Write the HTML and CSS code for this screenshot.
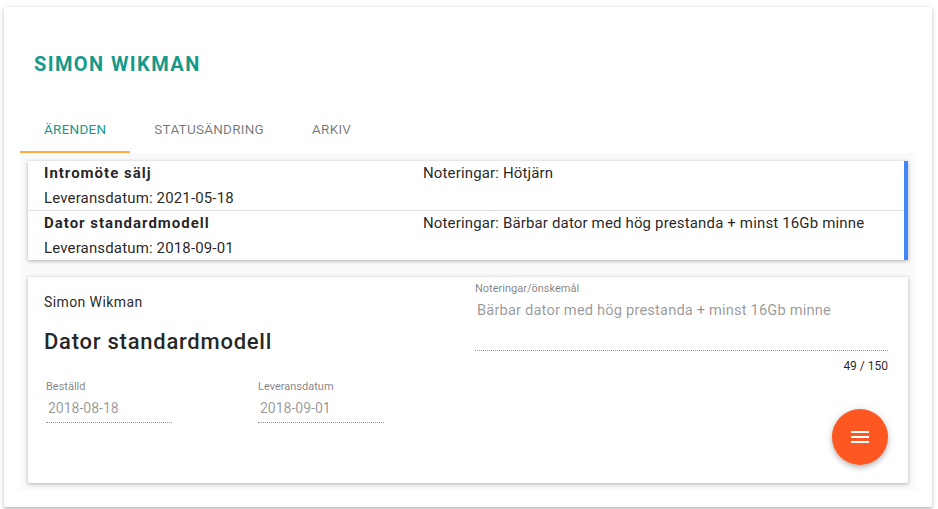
FILE: index.html
```html
<!DOCTYPE html>
<html lang="sv">
<head>
  <meta charset="UTF-8" />
  <meta name="viewport" content="width=device-width, initial-scale=1.0" />
  <title>Simon Wikman</title>
  <link rel="stylesheet" href="styles.css">
</head>
<body>
  <div class="page-card">
    <h1 class="customer-name">SIMON WIKMAN</h1>

    <div class="tabs">
      <div class="tab active">Ärenden</div>
      <div class="tab">Statusändring</div>
      <div class="tab">Arkiv</div>
    </div>

    <div class="tab-content">
      <div class="case-list">
        <div class="case-row">
          <div class="case-main">
            <div class="case-title">Intromöte sälj</div>
            <div class="case-date">Leveransdatum: 2021-05-18</div>
          </div>
          <div class="case-notes">Noteringar: Hötjärn</div>
        </div>
        <div class="case-row">
          <div class="case-main">
            <div class="case-title">Dator standardmodell</div>
            <div class="case-date">Leveransdatum: 2018-09-01</div>
          </div>
          <div class="case-notes">Noteringar: Bärbar dator med hög prestanda + minst 16Gb minne</div>
        </div>
      </div>

      <div class="case-detail">
        <div class="detail-left">
          <div class="detail-owner">Simon Wikman</div>
          <h2 class="detail-title">Dator standardmodell</h2>
          <div class="detail-fields">
            <div class="field">
              <label>Beställd</label>
              <div class="field-value">2018-08-18</div>
            </div>
            <div class="field">
              <label>Leveransdatum</label>
              <div class="field-value">2018-09-01</div>
            </div>
          </div>
        </div>
        <div class="detail-right">
          <label>Noteringar/önskemål</label>
          <div class="notes-value">Bärbar dator med hög prestanda + minst 16Gb minne</div>
          <div class="notes-counter">49 / 150</div>
          <div class="fab-row">
            <button class="fab" aria-label="Meny">
              <svg width="24" height="24" viewBox="0 0 24 24"><path fill="#fff" d="M3 18h18v-2H3v2zm0-5h18v-2H3v2zm0-7v2h18V6H3z"/></svg>
            </button>
          </div>
        </div>
      </div>
    </div>
  </div>
</body>
</html>
```

FILE: styles.css
```css
body {
  margin: 0;
  padding: 7px 6px 2px 4px;
  background: #fff;
  font-family: Roboto, 'Noto Sans', sans-serif;
  color: rgba(0, 0, 0, 0.87);
}

.page-card {
  background: #fff;
  border-radius: 2px;
  box-shadow: 0 1px 5px rgba(0, 0, 0, 0.2), 0 2px 2px rgba(0, 0, 0, 0.14);
  padding: 0 16px 17px 16px;
  height: 500px;
  box-sizing: border-box;
}

.customer-name {
  margin: 0;
  padding: 45px 0 0 14px;
  height: 53px;
  font-size: 20px;
  font-weight: 700;
  letter-spacing: 1.4px;
  color: #17998a;
  line-height: 24px;
}

.tabs {
  display: flex;
  height: 48px;
}

.tab {
  padding: 0 24px;
  line-height: 48px;
  font-size: 13.5px;
  text-transform: uppercase;
  color: rgba(0, 0, 0, 0.54);
  letter-spacing: 0.25px;
  box-sizing: border-box;
}

.tab.active {
  color: #17998a;
  border-bottom: 2px solid #ffab40;
}

.tab-content {
  background: #fafafa;
  padding: 8px 8px 7px;
}

.case-list {
  background: #fff;
  border-right: 4px solid #4285f4;
  box-shadow: 0 1px 4px rgba(0, 0, 0, 0.3);
  margin-bottom: 17px;
}

.case-row {
  display: grid;
  grid-template-columns: 379px 1fr;
  padding: 0 16px;
  font-size: 15px;
  line-height: 25px;
  letter-spacing: 0.15px;
}

.case-row + .case-row {
  border-top: 1px solid #e0e0e0;
}

.case-title {
  font-weight: 700;
  letter-spacing: 1px;
  line-height: 24px;
}

.case-date {
  padding-top: 1px;
  line-height: 24px;
}

.case-detail {
  display: flex;
  background: #fff;
  border-radius: 2px;
  box-shadow: 0 1px 4px rgba(0, 0, 0, 0.3);
  padding: 0 20px 18px 16px;
  height: 206px;
  box-sizing: border-box;
}

.detail-left {
  flex: 1;
  padding-top: 16px;
}

.detail-owner {
  font-size: 14px;
  line-height: 18px;
  letter-spacing: 0.4px;
}

.detail-title {
  margin: 17px 0 0;
  font-size: 22px;
  font-weight: 500;
  letter-spacing: 0.75px;
  line-height: 28px;
}

.detail-fields {
  display: flex;
  gap: 86px;
  margin-top: 24px;
  padding-left: 2px;
}

.field {
  width: 126px;
}

label {
  display: block;
  font-size: 11px;
  line-height: 14px;
  color: rgba(0, 0, 0, 0.5);
}

.field-value {
  margin-top: 6px;
  padding: 0 0 5px 2px;
  font-size: 14px;
  line-height: 17px;
  color: rgba(0, 0, 0, 0.42);
  border-bottom: 1px dotted rgba(0, 0, 0, 0.42);
}

.detail-right {
  width: 413px;
  padding-top: 5px;
  display: flex;
  flex-direction: column;
}

.notes-value {
  margin-top: 4px;
  padding: 0 0 29px 2px;
  font-size: 14.7px;
  line-height: 21px;
  letter-spacing: 0.15px;
  color: rgba(0, 0, 0, 0.42);
  border-bottom: 1px dotted rgba(0, 0, 0, 0.42);
}

.notes-counter {
  text-align: right;
  font-size: 12px;
  line-height: 14px;
  margin-top: 8px;
}

.fab-row {
  flex: 1;
  display: flex;
  justify-content: flex-end;
  align-items: flex-end;
}

.fab {
  width: 56px;
  height: 56px;
  border: none;
  border-radius: 50%;
  background: #ff5722;
  box-shadow: 0 3px 5px rgba(0, 0, 0, 0.2), 0 1px 10px rgba(0, 0, 0, 0.12);
  display: flex;
  align-items: center;
  justify-content: center;
  padding: 0;
  cursor: pointer;
}
```
